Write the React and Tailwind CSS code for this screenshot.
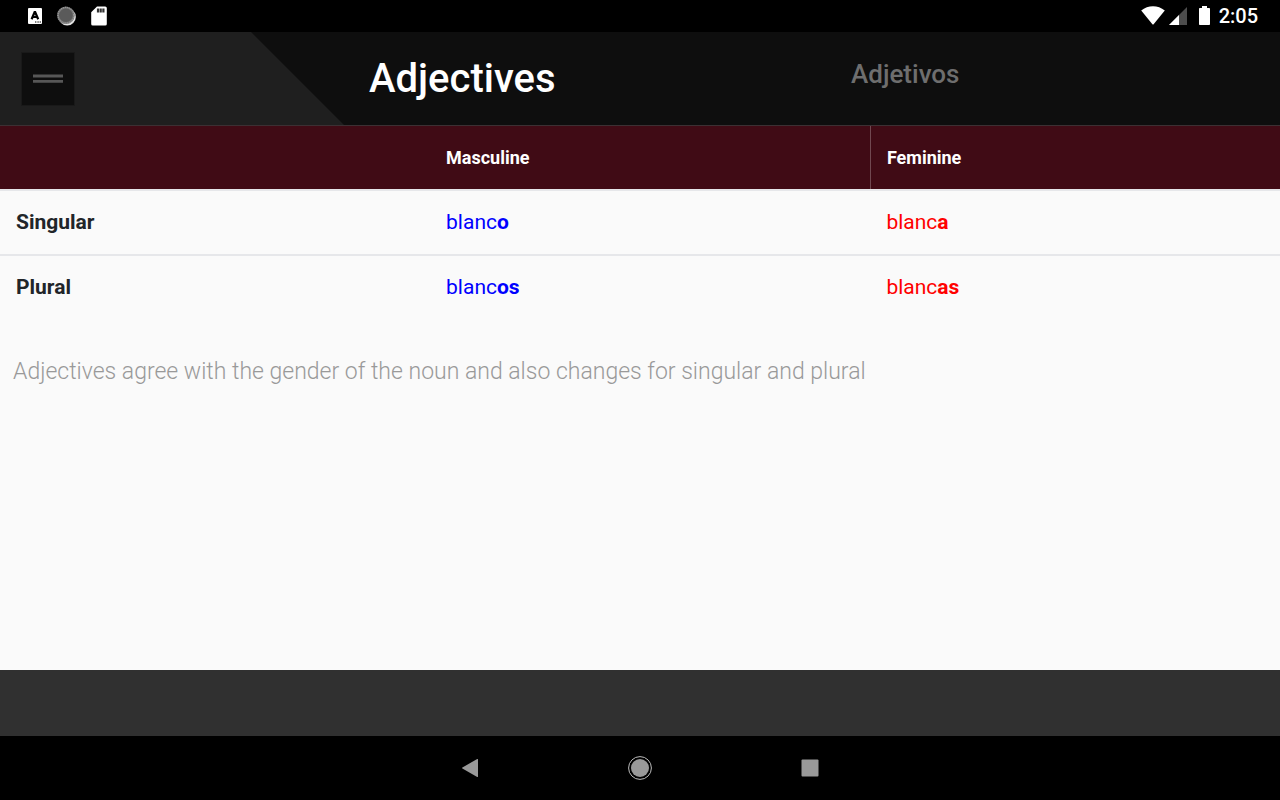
import React from 'react';

const rows = [
  { label: 'Singular', masculine: 'o', feminine: 'a' },
  { label: 'Plural', masculine: 'os', feminine: 'as' },
];

function StatusBar() {
  return (
    <div className="h-8 shrink-0 bg-black flex items-center justify-between pl-7 pr-[22px]">
      <div className="flex items-center gap-[14px]">
        <svg width="14" height="16" viewBox="0 0 14 16">
          <rect width="14" height="16" rx="1" fill="#fff" />
          <path d="M3.6 11.2 6.6 4.2h.6l3 7M4.8 9h4.4" fill="none" stroke="#000" strokeWidth="2.2" />
          <path d="M7 14h1.4M9.4 14h1.4M11.6 14H13" stroke="#000" strokeWidth="1" />
        </svg>
        <svg width="20" height="20" viewBox="0 0 20 20">
          <circle cx="11.2" cy="10.9" r="8.6" fill="#e4e4e4" />
          <circle cx="9.9" cy="9.3" r="8.8" fill="#777" />
          <circle cx="9.9" cy="9.3" r="7.9" fill="none" stroke="#999" strokeWidth="1.2" strokeDasharray="1 1" />
          <circle cx="9.9" cy="9.3" r="6.8" fill="#5a5a5a" />
        </svg>
        <svg className="ml-px" width="16" height="20" viewBox="0 0 16 20">
          <path d="M6 .5h8.2a1.6 1.6 0 0 1 1.6 1.6v15.8a1.6 1.6 0 0 1-1.6 1.6H1.8a1.6 1.6 0 0 1-1.6-1.6V6.2z" fill="#fff" />
          <path d="M7 2.5v4M9.7 2.5v4M12.4 2.5v4" stroke="#333" strokeWidth="2.2" />
        </svg>
      </div>
      <div className="flex items-center">
        <svg width="24" height="20" viewBox="0 0 24 20">
          <path d="M.2 4.6C7-1.3 17-1.3 23.8 4.6L12.6 18.2a.8.8 0 0 1-1.2 0z" fill="#fff" />
        </svg>
        <svg className="ml-1" width="18" height="18" viewBox="0 0 18 18">
          <path d="M18 0v18H0z" fill="#4d4d4d" />
          <path d="M10 8v10H0z" fill="#fff" />
        </svg>
        <svg className="ml-3" width="11" height="20" viewBox="0 0 11 20">
          <path d="M3 0h5v2h2.2a.8.8 0 0 1 .8.8v15.4a.8.8 0 0 1-.8.8H.8a.8.8 0 0 1-.8-.8V2.8A.8.8 0 0 1 .8 2H3z" fill="#fff" />
        </svg>
        <span className="ml-[9px] text-xl leading-8 font-medium text-white">2:05</span>
      </div>
    </div>
  );
}

function Header() {
  return (
    <header className="h-[94px] shrink-0 flex bg-[#0e0e0e] border-b border-[#3c3033]">
      <div className="w-[344px] shrink-0 pl-[21px] flex items-center bg-[#1f1f1f] [clip-path:polygon(0_0,251px_0,100%_100%,0_100%)]">
        <button
          type="button"
          aria-label="Menu"
          className="w-[54px] h-[54px] bg-[#0e0e0e] border border-[#191919] flex items-center justify-center"
        >
          <svg width="30" height="10" viewBox="0 0 30 10">
            <path d="M0 2h30M0 7.4h30" stroke="#575757" strokeWidth="2.8" />
          </svg>
        </button>
      </div>
      <h1 className="flex-1 pl-[25px] text-[40px] leading-[94px] font-medium text-white">Adjectives</h1>
      <p className="w-[429px] text-[26px] leading-[84px] font-medium text-[#6e6e6e]">Adjetivos</p>
    </header>
  );
}

function AdjectiveTable() {
  return (
    <table className="w-full table-fixed border-collapse text-left">
      <thead>
        <tr className="h-16 bg-[#400b15] text-lg text-white">
          <td className="w-[33.6%] px-4"></td>
          <th scope="col" className="w-[34.4%] px-4 font-bold">Masculine</th>
          <th scope="col" className="px-4 font-bold border-l border-[#704850]">Feminine</th>
        </tr>
      </thead>
      <tbody>
        {rows.map((row) => (
          <tr key={row.label} className="h-[65px] border-t-2 border-[#e6e7ea] text-[21px]">
            <th scope="row" className="px-4 font-bold text-[#212529]">{row.label}</th>
            <td className="px-4 text-[#0000ff]">blanc<b>{row.masculine}</b></td>
            <td className="px-4 text-[#ff0000]">blanc<b>{row.feminine}</b></td>
          </tr>
        ))}
      </tbody>
    </table>
  );
}

function NavBar() {
  return (
    <nav className="h-16 shrink-0 bg-black flex items-center justify-center gap-[146px]">
      <button type="button" aria-label="Back">
        <svg width="24" height="24" viewBox="0 0 24 24">
          <path d="M20 3.4v17.2a.5.5 0 0 1-.8.4L4.4 12.5a.6.6 0 0 1 0-1L19.2 3a.5.5 0 0 1 .8.4z" fill="#999" />
        </svg>
      </button>
      <button type="button" aria-label="Home">
        <svg width="24" height="24" viewBox="0 0 24 24">
          <circle cx="12" cy="12" r="11.4" fill="none" stroke="#bbb" strokeWidth="1" />
          <circle cx="12" cy="12" r="9" fill="#999" />
        </svg>
      </button>
      <button type="button" aria-label="Recent apps">
        <svg width="24" height="24" viewBox="0 0 24 24">
          <rect x="3.5" y="3.5" width="17" height="17" rx="1" fill="#999" />
        </svg>
      </button>
    </nav>
  );
}

function App() {
  return (
    <div className="min-h-screen flex flex-col bg-[#fafafa] font-[Roboto,sans-serif]">
      <StatusBar />
      <Header />
      <main className="flex-1">
        <AdjectiveTable />
        <p className="px-[13px] pt-8 text-[23px] leading-10 font-light text-[#999]">
          Adjectives agree with the gender of the noun and also changes for singular and plural
        </p>
      </main>
      <footer className="h-[66px] shrink-0 bg-[#303030]" />
      <NavBar />
    </div>
  );
}

export default App;
